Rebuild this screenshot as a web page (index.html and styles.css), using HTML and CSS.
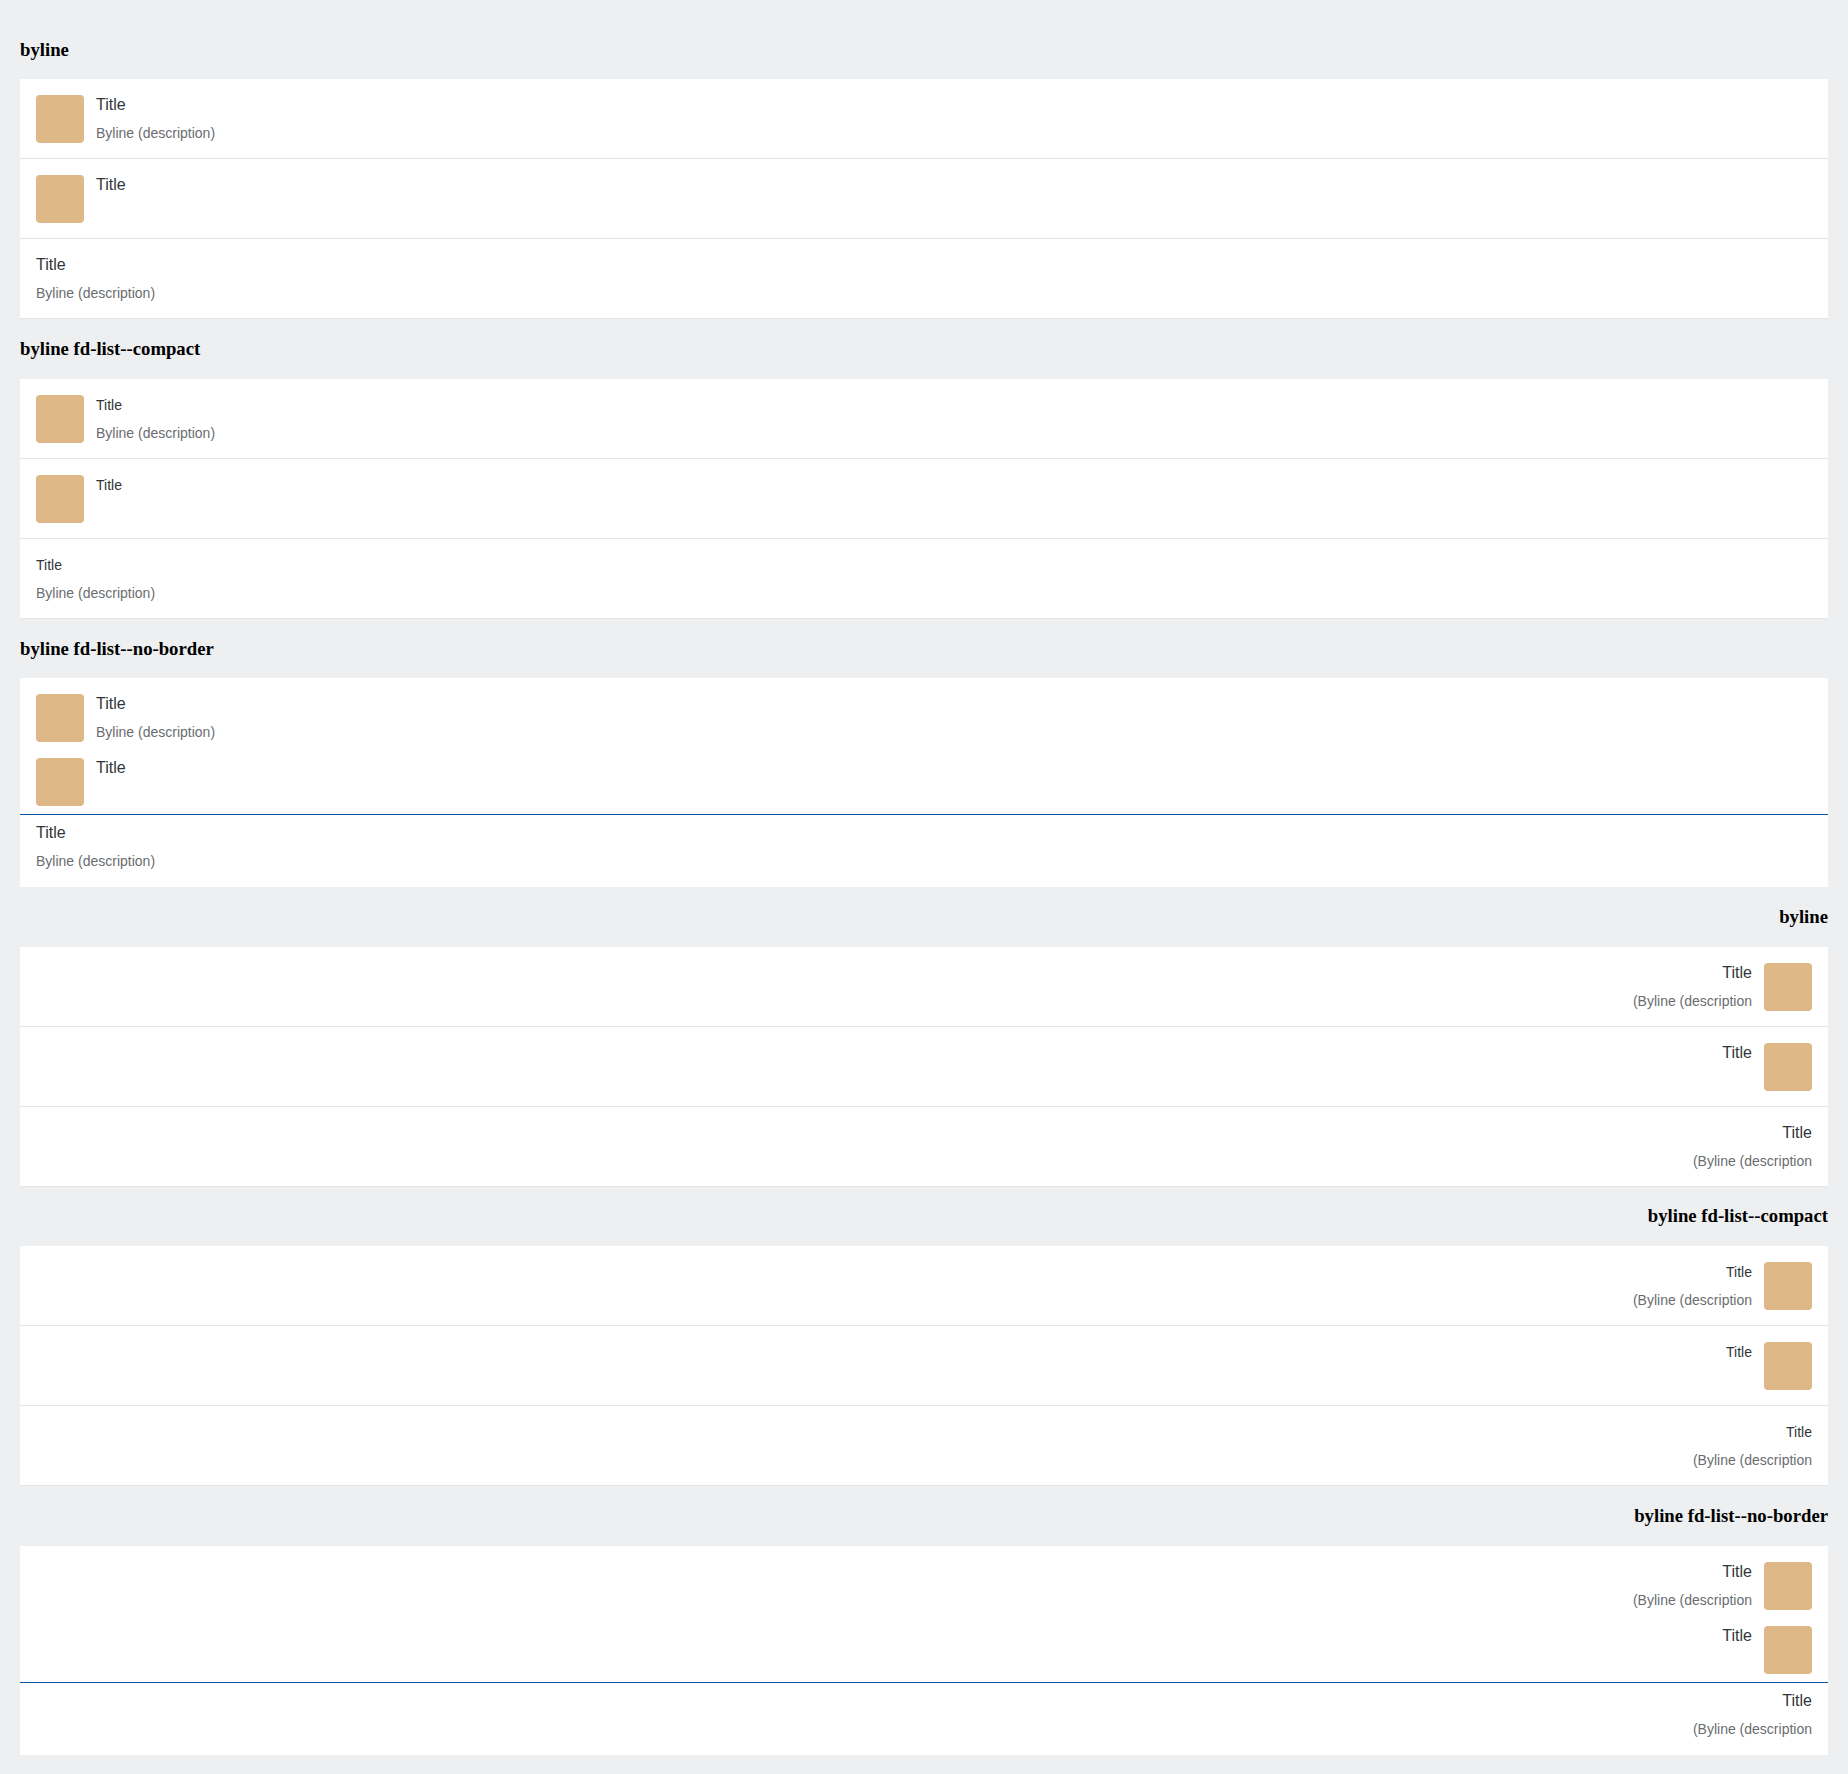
FILE: index.html
```html
<!DOCTYPE html>
<html lang="en">
<head>
<meta charset="utf-8">
<title>List byline</title>
<link rel="stylesheet" href="styles.css">
</head>
<body>
<div class="page">
  <section class="demo">
    <h3 class="demo-heading">byline</h3>
    <ul class="list">
      <li class="item"><span class="thumb"></span><div class="content"><div class="title">Title</div><div class="byline">Byline (description)</div></div></li>
      <li class="item"><span class="thumb"></span><div class="content"><div class="title">Title</div></div></li>
      <li class="item"><div class="content"><div class="title">Title</div><div class="byline">Byline (description)</div></div></li>
    </ul>
  </section>
  <section class="demo">
    <h3 class="demo-heading">byline fd-list--compact</h3>
    <ul class="list list--compact">
      <li class="item"><span class="thumb"></span><div class="content"><div class="title">Title</div><div class="byline">Byline (description)</div></div></li>
      <li class="item"><span class="thumb"></span><div class="content"><div class="title">Title</div></div></li>
      <li class="item"><div class="content"><div class="title">Title</div><div class="byline">Byline (description)</div></div></li>
    </ul>
  </section>
  <section class="demo">
    <h3 class="demo-heading">byline fd-list--no-border</h3>
    <ul class="list list--no-border">
      <li class="item"><span class="thumb"></span><div class="content"><div class="title">Title</div><div class="byline">Byline (description)</div></div></li>
      <li class="item item--divider"><span class="thumb"></span><div class="content"><div class="title">Title</div></div></li>
      <li class="item"><div class="content"><div class="title">Title</div><div class="byline">Byline (description)</div></div></li>
    </ul>
  </section>
  <div class="rtl" dir="rtl">
    <section class="demo">
      <h3 class="demo-heading">byline</h3>
      <ul class="list">
        <li class="item"><span class="thumb"></span><div class="content"><div class="title">Title</div><div class="byline"><span class="byline-text" dir="ltr">(Byline (description</span></div></div></li>
        <li class="item"><span class="thumb"></span><div class="content"><div class="title">Title</div></div></li>
        <li class="item"><div class="content"><div class="title">Title</div><div class="byline"><span class="byline-text" dir="ltr">(Byline (description</span></div></div></li>
      </ul>
    </section>
    <section class="demo">
      <h3 class="demo-heading">byline fd-list--compact</h3>
      <ul class="list list--compact">
        <li class="item"><span class="thumb"></span><div class="content"><div class="title">Title</div><div class="byline"><span class="byline-text" dir="ltr">(Byline (description</span></div></div></li>
        <li class="item"><span class="thumb"></span><div class="content"><div class="title">Title</div></div></li>
        <li class="item"><div class="content"><div class="title">Title</div><div class="byline"><span class="byline-text" dir="ltr">(Byline (description</span></div></div></li>
      </ul>
    </section>
    <section class="demo">
      <h3 class="demo-heading">byline fd-list--no-border</h3>
      <ul class="list list--no-border">
        <li class="item"><span class="thumb"></span><div class="content"><div class="title">Title</div><div class="byline"><span class="byline-text" dir="ltr">(Byline (description</span></div></div></li>
        <li class="item item--divider"><span class="thumb"></span><div class="content"><div class="title">Title</div></div></li>
        <li class="item"><div class="content"><div class="title">Title</div><div class="byline"><span class="byline-text" dir="ltr">(Byline (description</span></div></div></li>
      </ul>
    </section>
  </div>
</div>
</body>
</html>
```
FILE: styles.css
```css
html, body {
  margin: 0;
  padding: 0;
  background: #edeff0;
}

.page {
  padding: 20px;
}

.demo-heading {
  font-family: "Liberation Serif", "Times New Roman", serif;
  font-weight: bold;
  font-size: 18.72px;
  line-height: 22px;
  margin: 18.72px 0;
  color: #000;
}

.list {
  list-style: none;
  margin: 0;
  padding: 0;
  background: #fff;
  font-family: "Liberation Sans", Arial, sans-serif;
}

.item {
  display: flex;
  align-items: flex-start;
  gap: 12px;
  box-sizing: border-box;
  height: 80px;
  padding: 16px;
  border-bottom: 1px solid #e4e4e4;
  background: #fff;
}

.thumb {
  flex: 0 0 48px;
  width: 48px;
  height: 48px;
  border-radius: 4px;
  background: #deb887;
}

.content {
  display: flex;
  flex-direction: column;
  min-width: 0;
}

.title {
  font-size: 16px;
  line-height: 20px;
  color: #32363a;
}

.byline {
  margin-top: 8px;
  font-size: 14px;
  line-height: 20px;
  color: #6a6d70;
}

.byline-text {
  unicode-bidi: isolate;
}

.list--compact .title {
  font-size: 14px;
}

.list--no-border {
  padding: 8px 0;
}

.list--no-border .item {
  height: auto;
  padding: 8px 16px;
  border-bottom: none;
}

.list--no-border .item.item--divider {
  border-bottom: 1px solid #0854a0;
}
```
